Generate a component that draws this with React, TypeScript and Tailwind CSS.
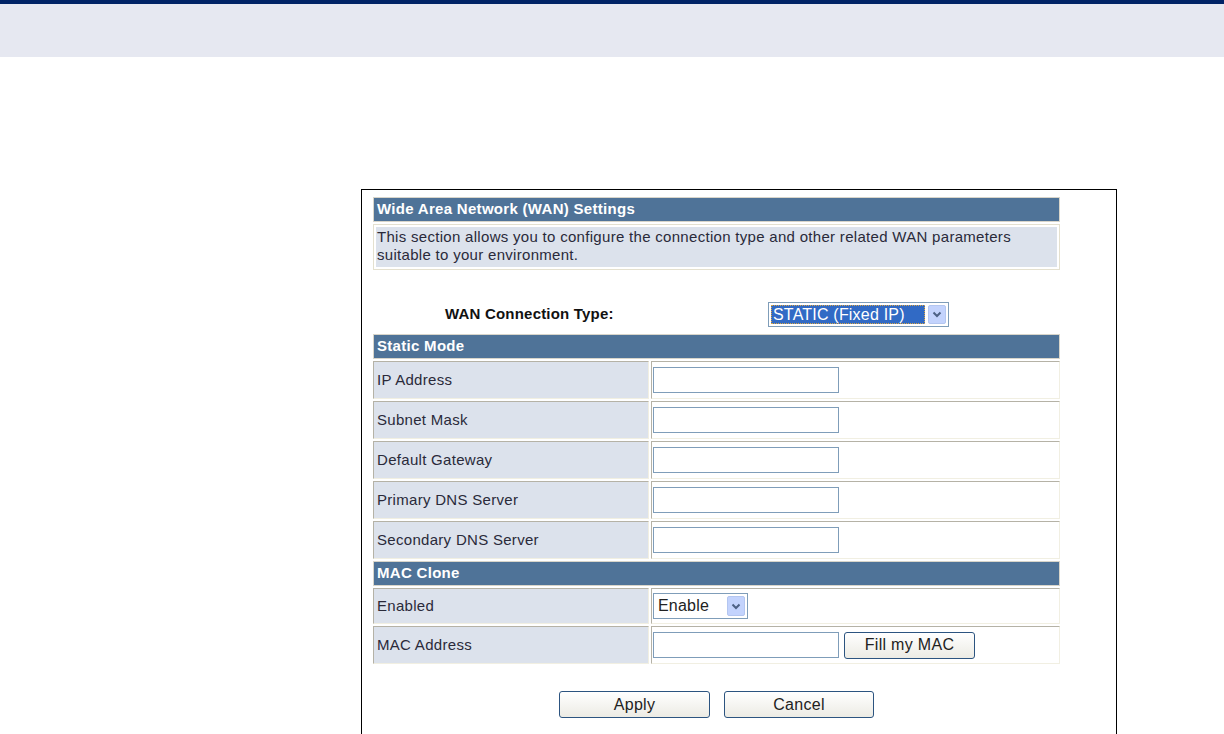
import React from "react";

const cellBorder =
  "border border-t-[#B5B2A6] border-l-[#B5B2A6] border-b-[#F1EFE2] border-r-[#F1EFE2]";

function Chevron() {
  return (
    <svg width="10" height="7" viewBox="0 0 10 7">
      <path d="M1.5 1.5 L5 5 L8.5 1.5" fill="none" stroke="#4D6185" strokeWidth="2" />
    </svg>
  );
}

function SectionHeader({ title }: { title: string }) {
  return (
    <div className="border border-[#D8D5CA] bg-[#4F7398] h-[25px] flex items-center pl-[3px] text-[15px] tracking-[0.3px] font-bold text-white">
      {title}
    </div>
  );
}

function TextBox() {
  return <div className="w-[186px] h-[26px] border border-[#7F9DB9] bg-white" />;
}

function XpButton({ label, className }: { label: string; className: string }) {
  return (
    <button
      className={`h-[27px] rounded-[3px] border border-[#2C5480] bg-gradient-to-b from-white to-[#ECEBE4] text-[16px] tracking-[0.3px] text-[#222] ${className}`}
    >
      {label}
    </button>
  );
}

function FieldRow({ label, children, h = "h-[38px]" }: { label: string; children?: React.ReactNode; h?: string }) {
  return (
    <div className="flex gap-[2px]">
      <div className={`w-[276px] ${h} ${cellBorder} bg-[#DCE2EC] flex items-center pl-[3px] text-[15px] tracking-[0.3px] text-[#2a2a3a]`}>
        {label}
      </div>
      <div className={`flex-1 ${h} ${cellBorder} bg-white flex items-center pl-[1px] gap-[5px]`}>
        {children}
      </div>
    </div>
  );
}

export default function App() {
  const staticRows = ["IP Address", "Subnet Mask", "Default Gateway", "Primary DNS Server", "Secondary DNS Server"];

  return (
    <div className="w-[1224px] h-[734px] overflow-hidden bg-white font-['Liberation_Sans',Arial,sans-serif]">
      <div className="h-[4px] bg-[#002366]" />
      <div className="h-[53px] bg-[#E6E8F1]" />

      <div className="mt-[132px] ml-[361px] w-[756px] h-[560px] border border-black pt-[7px] pl-[11px]">
        <div className="w-[687px] flex flex-col gap-[2px]">
          <SectionHeader title="Wide Area Network (WAN) Settings" />
          <div className="border border-[#E4E0CF] p-[2px] bg-white">
            <div className="bg-[#DCE2EC] h-[40px] pl-[1px] pt-[1px] text-[15px] tracking-[0.3px] leading-[18px] text-[#2a2a3a]">
              This section allows you to configure the connection type and other related WAN parameters
              <br />
              suitable to your environment.
            </div>
          </div>

          <div className="h-[60px] flex items-end pb-[5px]">
            <div className="w-[395px] h-[25px] flex items-center pl-[72px] text-[15px] tracking-[0.2px] font-bold text-[#111]">
              WAN Connection Type:
            </div>
            <div className="w-[181px] h-[25px] border border-[#7F9DB9] bg-white flex items-center p-[2px]">
              <div className="flex-1 h-full bg-[#316AC5] outline-1 outline-dotted outline-[#D9A648] -outline-offset-1 flex items-center pl-[2px] text-[16px] tracking-[0.2px] text-white">
                STATIC (Fixed IP)
              </div>
              <div className="w-[18px] h-full ml-[3px] rounded-[2px] bg-[#C3D3FD] border border-[#B4C6F0] flex items-center justify-center">
                <Chevron />
              </div>
            </div>
          </div>

          <SectionHeader title="Static Mode" />
          {staticRows.map((r) => (
            <FieldRow key={r} label={r}>
              <TextBox />
            </FieldRow>
          ))}

          <SectionHeader title="MAC Clone" />
          <FieldRow label="Enabled" h="h-[36px]">
            <div className="w-[95px] h-[26px] border border-[#7F9DB9] bg-white flex items-center p-[2px]">
              <div className="flex-1 pl-[2px] text-[16px] tracking-[0.2px] text-[#222]">Enable</div>
              <div className="w-[18px] h-full rounded-[2px] bg-[#C3D3FD] border border-[#B4C6F0] flex items-center justify-center">
                <Chevron />
              </div>
            </div>
          </FieldRow>
          <FieldRow label="MAC Address">
            <TextBox />
            <XpButton label="Fill my MAC" className="w-[131px]" />
          </FieldRow>

          <div className="flex justify-center gap-[14px] pt-[25px]">
            <XpButton label="Apply" className="w-[151px]" />
            <XpButton label="Cancel" className="w-[150px]" />
          </div>
        </div>
      </div>
    </div>
  );
}
